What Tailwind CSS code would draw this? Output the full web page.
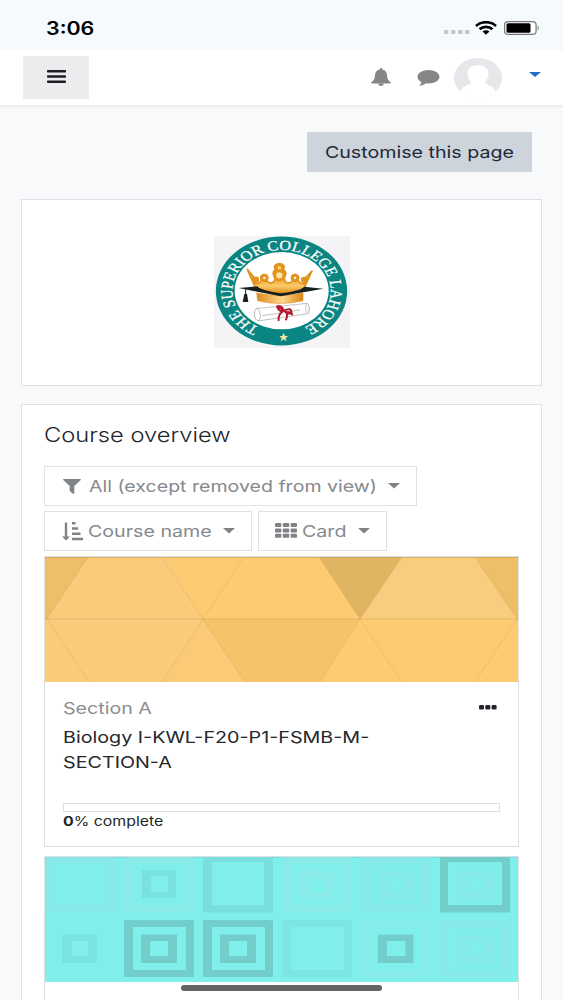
<!DOCTYPE html>
<html lang="en">
<head>
  <meta charset="UTF-8" />
  <meta name="viewport" content="width=device-width, initial-scale=1.0"/>
  <title>Dashboard</title>

  <!-- Tailwind CSS -->
  <script src="https://cdn.jsdelivr.net/npm/@tailwindcss/browser@4"></script>
</head>
<body class="h-[1000px] overflow-hidden bg-[#f8f9fb] font-[Inter,sans-serif] text-[#212529]">
  <div class="relative h-[1000px] overflow-hidden">

    <!-- Status bar -->
    <div class="flex h-[50px] items-center justify-between bg-[#f5fafc] pt-[6px] pl-[46px] pr-[23px]">
      <span class="origin-left scale-x-[1.19] whitespace-nowrap text-[18px] font-semibold text-black">3:06</span>
      <div class="flex items-center">
        <svg class="mt-[8px] h-[4px] w-[26px]" viewBox="0 0 26 4" fill="#c3c6c8">
          <rect width="4.5" height="4" rx="1"/><rect x="7" width="4.5" height="4" rx="1"/><rect x="14" width="4.5" height="4" rx="1"/><rect x="21" width="4.5" height="4" rx="1"/>
        </svg>
        <svg class="ml-[5px] h-[14px] w-[22px]" viewBox="0 0 22 14" fill="none" stroke="#000" stroke-width="2.7">
          <path d="M1 4.9C6.5 0 15.500 0 21 4.900"/>
          <path d="M4.600 8.300C8 5.100 14 5.100 17.400 8.300"/>
          <path d="M7.500 10.500C9.500 8.900 12.500 8.900 14.500 10.500L11 13.700Z" fill="#000" stroke="none"/>
        </svg>
        <svg class="ml-[7px] h-[14px] w-[36px]" viewBox="0 0 36 14">
          <rect x=".6" y=".6" width="31.500" height="12.800" rx="3.500" fill="#fff" stroke="#777" stroke-width="1.200"/>
          <rect x="2.500" y="2.200" width="24" height="9.600" rx="1.500" fill="#000"/>
          <path d="M33.700 4.500Q36 7 33.700 9.500Z" fill="#777"/>
        </svg>
      </div>
    </div>

    <!-- Navbar -->
    <nav class="flex h-[56px] items-center border-b border-[#ebebed] bg-white pl-[23px] pr-[22px] shadow-[0_1px_3px_rgba(0,0,0,0.06)]">
      <button class="flex h-[43px] w-[66px] items-center justify-center bg-[#ececee]">
        <svg class="mb-[2px] h-[13px] w-[19px]" viewBox="0 0 19 13" fill="#1b1d20">
          <rect width="19" height="2.500" rx=".8"/><rect y="5.200" width="19" height="2.500" rx=".8"/><rect y="10.400" width="19" height="2.500" rx=".8"/>
        </svg>
      </button>
      <div class="ml-auto flex items-center">
        <svg class="mb-[2px] h-[18px] w-[20px]" viewBox="0 0 20 18" fill="#868686">
          <path d="M10 0C10.900 0 11.300.6 11.200 1.400C14.400 2 16 4.300 16 7.200C16.100 11 17.600 12.900 20 14.600C19.800 15.300 19.200 15.500 18.500 15.500H1.500C.8 15.500.2 15.300 0 14.600C2.400 12.900 3.900 11 4 7.200C4 4.300 5.600 2 8.800 1.400C8.700.6 9.100 0 10 0ZM7.300 15.800H12.700C12.600 17.100 11.500 18 10 18S7.400 17.100 7.300 15.800Z"/>
        </svg>
        <svg class="ml-[26px] h-[16px] w-[23px]" viewBox="0 0 23 16" fill="#868686">
          <path d="M11.500 0C17.800 0 22.500 3.100 22.500 6.800S17.800 13.500 11.500 13.500C10.600 13.500 9.700 13.400 8.900 13.300C7.200 14.800 4.900 15.600 2.300 15.700C3.300 14.700 4.200 13.800 4.400 12.100C1.900 10.900.5 9 .5 6.800C.5 3.100 5.200 0 11.500 0Z"/>
        </svg>
        <svg class="ml-[14px] h-[40px] w-[48px]" viewBox="0 0 48 40">
          <clipPath id="avatar"><ellipse cx="24" cy="20" rx="24" ry="20"/></clipPath>
          <g clip-path="url(#avatar)">
            <rect width="48" height="40" fill="#e6e7ea"/>
            <path d="M24 7C30.500 7 34.500 10.600 34.500 15.500C34.500 19.300 33 22.200 31 23.900C32.500 27.700 39.500 27 42 34V40H6V34C8.500 27 15.500 27.700 17 23.900C15 22.200 13.500 19.300 13.500 15.500C13.500 10.600 17.500 7 24 7Z" fill="#fff"/>
          </g>
        </svg>
        <svg class="ml-[27px] mb-[6px] h-[5px] w-[12px]" viewBox="0 0 12 5" fill="#1d6fc2"><path d="M0 0H12L6 5Z"/></svg>
      </div>
    </nav>

    <main class="pl-[21px] pr-[21px]">
      <div class="flex justify-end pt-[26px] pr-[10px]">
        <button class="flex h-[40px] w-[225px] items-center justify-center bg-[#ced4db] text-[#212939]">
          <span class="scale-x-[1.19] whitespace-nowrap text-[16.5px]">Customise this page</span>
        </button>
      </div>

      <!-- College logo -->
      <section class="mt-[27px] flex h-[187px] justify-center border border-[#e0e1e4] bg-white pt-[36px]">
        <svg class="h-[112px] w-[136px]" viewBox="42 33 408 336">
          <defs>
            <linearGradient id="gold" x1="0" y1="0" x2="0" y2="1">
              <stop offset="0" stop-color="#e0951f"/><stop offset=".5" stop-color="#f2a62c"/><stop offset=".75" stop-color="#fbc96c"/><stop offset="1" stop-color="#e0921c"/>
            </linearGradient>
            <linearGradient id="band"><stop offset="0" stop-color="#dc8d1c"/><stop offset=".55" stop-color="#fdd78c"/><stop offset="1" stop-color="#d98514"/></linearGradient>
            <path id="ring" d="M-55 110A123 123 0 1 1 57 109"/>
          </defs>
          <rect x="42" y="33" width="408" height="336" fill="#f4f4f6"/>
          <ellipse cx="244.500" cy="198" rx="197" ry="163.500" fill="#0b8581"/>
          <ellipse cx="245" cy="197" rx="141" ry="116" fill="#fff"/>
          <g transform="translate(244.500 198) scale(1.200 1)">
            <text class="font-[Liberation_Serif,serif]" font-size="42" fill="#fff" stroke="#fff" stroke-width=".7"><textPath href="#ring" textLength="656" lengthAdjust="spacingAndGlyphs">THE SUPERIOR COLLEGE LAHORE</textPath></text>
          </g>
          <!-- crown -->
          <path d="M142 133L170 197Q240 212 309 197L336 138L315 160Q325 166 316 175Q300 180 294 165Q300 153 286 149Q272 149 275 162Q283 172 262 174Q250 170 254 156Q262 140 250 134Q258 118 238 116Q218 118 226 134Q214 142 224 156Q228 170 214 174Q196 172 203 160Q204 149 192 149Q178 153 184 165Q178 180 165 174Q156 166 163 158Z" fill="url(#gold)" stroke="#df921f" stroke-width="5" stroke-linejoin="round"/>
          <g fill="none" stroke="#e2951f" stroke-width="9">
            <circle cx="238" cy="129" r="10" fill="#fbd48a"/><circle cx="238" cy="151" r="14" fill="#fbe0a8"/>
            <circle cx="193" cy="159" r="8" fill="#fff"/><circle cx="285" cy="159" r="8" fill="#fff"/><circle cx="168" cy="164" r="5" fill="#fff"/><circle cx="312" cy="165" r="5" fill="#fff"/>
          </g>
          <path d="M170 204Q240 218 309 204V227Q240 244 173 227Z" fill="url(#band)" stroke="#d98514" stroke-width="1.500"/>
          <!-- mortarboard -->
          <path d="M116 189L172 184Q180 196 242 205Q306 196 312 185L370 191L242 214Z" fill="#17201f"/>
          <path d="M137 192V210" stroke="#17201f" stroke-width="3"/>
          <path d="M133 207H141L145 231H128Z" fill="#17201f"/>
          <!-- diploma -->
          <g fill="#fff" stroke="#85858b" stroke-width="1.500">
            <path d="M168 251L322 235Q332 250 325 266L174 288Q158 276 168 251Z"/>
            <ellipse cx="172" cy="269" rx="9" ry="18" transform="rotate(-8 172 269)"/>
            <path d="M186 272L300 255" fill="none"/><ellipse cx="322" cy="251" rx="5" ry="15"/>
          </g>
          <g fill="none" stroke="#b5182a" stroke-width="6">
            <path d="M252 257Q226 236 233 249T252 257Q273 247 274 260T252 257M249 258Q233 270 236 288M256 259Q266 270 257 286"/>
            <path d="M232 245Q244 241 250 254M262 262Q276 260 277 271"/>
          </g>
          <path d="M251 323L255 333H264L257 340L260 349L251 343L242 349L245 340L238 333H247Z" fill="#f6e3a3"/>
        </svg>
      </section>

      <!-- Course overview -->
      <section class="mt-[18px] h-[640px] border border-[#e0e1e4] bg-white px-[22px] pt-[15px]">
        <h2 class="h-[46px] w-fit origin-left scale-x-[1.185] whitespace-nowrap text-[20px] leading-[30px] font-light text-[#22252b]">Course overview</h2>

        <div class="flex flex-wrap gap-x-[6px] gap-y-[5px] text-[16.5px] text-[#86898d]">
          <button class="flex h-[40px] w-[373px] items-center border border-[#dfe1e5] pr-[16px] pl-[18px]">
            <svg class="mr-[8px] h-[15px] w-[18px] shrink-0" viewBox="0 0 18 15" fill="#7f8286"><path d="M.7 0H17.300Q18.400.4 17.500 1.300L11.300 7V14.200Q11 15.200 10 14.700L7.200 12.600Q6.700 12.300 6.700 11.700V7L.5 1.300Q-.4.4.7 0Z"/></svg>
            <span class="w-[288px] text-left"><span class="inline-block origin-left scale-x-[1.185] whitespace-nowrap">All (except removed from view)</span></span>
            <svg class="ml-auto h-[6px] w-[12px] shrink-0" viewBox="0 0 12 6" fill="#7f8286"><path d="M0 0H12L6 5.500Z"/></svg>
          </button>
          <div class="flex gap-[6px]">
            <button class="flex h-[40px] w-[208px] items-center border border-[#dfe1e5] pr-[16px] pl-[17px]">
              <svg class="mr-[5px] h-[19px] w-[21px] shrink-0" viewBox="0 0 21 19" fill="#7f8286">
                <path d="M2.800.5H5.200V14.500H8L4 18.500L0 14.500H2.800ZM10 0H13.500V2.600H10ZM10 5.200H16V7.800H10ZM10 10.500H18.500V13.100H10ZM10 15.700H21V18.300H10Z"/>
              </svg>
              <span class="w-[122px] text-left"><span class="inline-block origin-left scale-x-[1.19] whitespace-nowrap">Course name</span></span>
              <svg class="ml-auto h-[6px] w-[12px] shrink-0" viewBox="0 0 12 6" fill="#7f8286"><path d="M0 0H12L6 5.500Z"/></svg>
            </button>
            <button class="flex h-[40px] w-[129px] items-center border border-[#dfe1e5] pr-[16px] pl-[16px]">
              <svg class="mr-[5px] mb-[2px] h-[15px] w-[22px] shrink-0" viewBox="0 0 22 15" fill="#7f8286">
                <rect width="6.400" height="4" rx="1"/><rect x="7.800" width="6.400" height="4" rx="1"/><rect x="15.600" width="6.400" height="4" rx="1"/>
                <rect y="5.400" width="6.400" height="4" rx="1"/><rect x="7.800" y="5.400" width="6.400" height="4" rx="1"/><rect x="15.600" y="5.400" width="6.400" height="4" rx="1"/>
                <rect y="10.800" width="6.400" height="4" rx="1"/><rect x="7.800" y="10.800" width="6.400" height="4" rx="1"/><rect x="15.600" y="10.800" width="6.400" height="4" rx="1"/>
              </svg>
              <span class="w-[44px] text-left"><span class="inline-block origin-left scale-x-[1.19] whitespace-nowrap">Card</span></span>
              <svg class="ml-auto h-[6px] w-[12px] shrink-0" viewBox="0 0 12 6" fill="#7f8286"><path d="M0 0H12L6 5.500Z"/></svg>
            </button>
          </div>
        </div>

        <!-- Course card: Biology -->
        <article class="mt-[5px] h-[291px] border border-[#dfe0e3]">
          <svg class="block h-[125px] w-[473px]" viewBox="45 557 473 125">
            <rect x="45" y="557" width="473" height="125" fill="#fccb72"/>
            <path d="M88 557H165L203 619L165 682H45V619Z" fill="#facb7b"/>
            <path d="M402 557H475L517 619H360Z" fill="#f8cd80"/>
            <path d="M203 619L245 682H161Z" fill="#faca76"/>
            <path d="M45 557H88L47 619H45Z" fill="#edbf68"/>
            <path d="M319 557H402L360 619Z" fill="#e0b562"/>
            <path d="M475 557H518V619H517Z" fill="#edc067"/>
            <path d="M203 619H360L320 682H245Z" fill="#f5c46a"/>
            <g fill="none" stroke="#c99d4f" stroke-opacity=".4">
              <path d="M45 619H518"/>
              <path d="M88 557L47 619L89 682M162 557L203 619L162 682M244 557L203 619L245 682M319 557L360 619L320 682M402 557L360 619L402 682M475 557L517 619L475 682" stroke-opacity=".25"/>
              <path d="M45 557.500H518" stroke-opacity=".6"/>
            </g>
          </svg>
          <div class="flex justify-between pt-[13px] pr-[21px] pl-[18px]">
            <div class="w-[330px]">
              <p class="w-fit origin-left scale-x-[1.19] whitespace-nowrap text-[16.5px] leading-[26px] text-[#8b8e92]">Section A</p>
              <p class="mt-[4px] w-fit origin-left scale-x-[1.195] whitespace-nowrap text-[16.5px] leading-[25px] text-[#25282c]">Biology I-KWL-F20-P1-FSMB-M-<br>SECTION-A</p>
            </div>
            <svg class="mt-[10px] h-[5px] w-[18px]" viewBox="0 0 18 5" fill="#222529"><rect width="5" height="4.600" rx="1.300"/><rect x="6.300" width="5" height="4.600" rx="1.300"/><rect x="12.600" width="5" height="4.600" rx="1.300"/></svg>
          </div>
          <div class="mx-[18px] mt-[28px] h-[9px] w-[437px] border border-[#dddfe3]"></div>
          <p class="ml-[18px] w-fit origin-left scale-x-[1.22] whitespace-nowrap text-[13px] leading-[19px]"><b>0</b>% complete</p>
        </article>

        <!-- Next course card -->
        <article class="mt-[9px] h-[200px] border border-[#dfe0e3]">
          <svg class="block h-[125px] w-[473px]" viewBox="45 857 473 125" fill="none">
            <rect x="45" y="857" width="473" height="125" fill="#80eeea"/>
            <path d="M45 857.500H518" stroke="#7adfdc"/>
            <!-- wide and tall sides differ, so every frame is an even-odd path -->
            <g fill-rule="evenodd" fill="#72cdcb">
              <path d="M440 857H510V912.500H440ZM448 862V905H502V862Z"/>
              <path d="M124 920H194V977H124ZM133 927V970H186V927ZM141 934.500H177V963H141ZM150 941V956H168V941Z"/>
              <path d="M203 920H273V977H203ZM212 927V970H265V927ZM220 934.500H256V963H220ZM229 941V956H247V941Z"/>
              <path d="M378 934.500H413.500V963H378ZM387 941V956H405.500V941Z"/>
              <path d="M203 857H273V912.500H203ZM212 862V905H264V862Z" fill="#78dfdd"/>
              <path d="M283 920H352V977H283ZM291 927V970H344V927Z" fill="#7be5e2"/>
              <path d="M142 870H176V898H142ZM151 876V892H168V876Z" fill="#79e2df"/>
              <path d="M62 934.500H97V963H62ZM72 941V956H88V941Z" fill="#79e4e1"/>
            </g>
            <g fill-rule="evenodd" fill="#8ce8e7">
              <path d="M45 857H115V912H45ZM53 863V905H107V863Z" opacity=".6"/>
              <path d="M124 857H194V912H124ZM133 863V905H186V863Z" opacity=".8"/>
              <path d="M283 857H352V912H283ZM291 863V905H344V863ZM300 871H334V899H300ZM309 878V892H325V878Z" opacity=".8"/>
              <path d="M362 857H430V912H362ZM370 863V905H422V863ZM380 871H413V899H380ZM389 878V892H405V878Z" opacity=".6"/>
              <path d="M457 871H493V899H457ZM467 878V892H485V878Z" opacity=".6"/>
              <path d="M362 920H430V977H362ZM370 927V970H422V927Z" opacity=".5"/>
              <path d="M440 920H510V977H440ZM448 927V970H502V927ZM457 935H493V963H457ZM467 941V956H485V941Z" opacity=".6"/>
            </g>
          </svg>
        </article>
      </section>
    </main>

    <!-- Home indicator -->
    <div class="absolute top-[985px] left-[181px] h-[6px] w-[201px] rounded-full bg-[#626265]"></div>
  </div>
</body>
</html>
